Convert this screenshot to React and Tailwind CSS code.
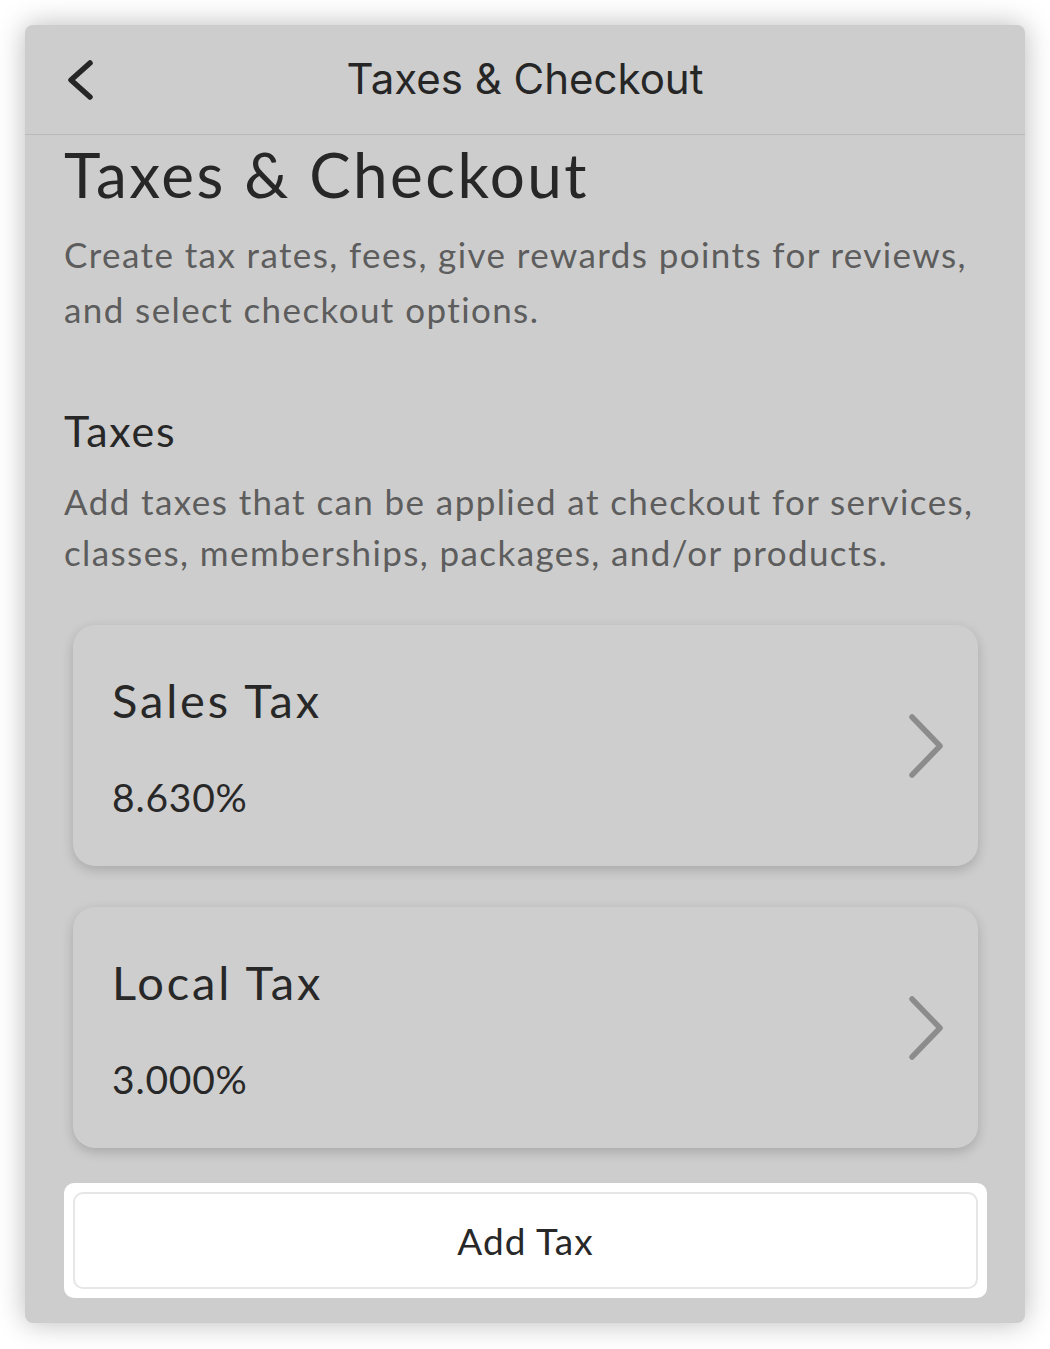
const taxes = [
  { name: "Sales Tax", rate: "8.630%" },
  { name: "Local Tax", rate: "3.000%" },
];

const body = { fontFamily: "Lato, 'Open Sans', sans-serif" };

const TaxCard = ({ tax }) => (
  <div className="mx-[9px] h-[241px] rounded-[22px] bg-[#cecece] shadow-[0_4px_12px_rgba(0,0,0,0.18)] flex items-center justify-between pl-[39px] pr-[32px]">
    <div className="flex flex-col">
      <p className="text-[47px] leading-[56px] tracking-[0.06em] text-[#282828]">
        {tax.name}
      </p>
      <p className="mt-[47px] text-[39px] leading-[44px] tracking-[0.02em] text-[#282828]">
        {tax.rate}
      </p>
    </div>
    <svg width="42" height="70" viewBox="0 0 42 70" fill="none">
      <polyline
        points="8,6 36,35 8,64"
        stroke="#8c8c8c"
        strokeWidth="5.5"
        strokeLinecap="round"
        strokeLinejoin="round"
      />
    </svg>
  </div>
);

export default function App() {
  return (
    <div className="min-h-[1349px] bg-white p-[25px]" style={body}>
      <div className="w-[1000px] h-[1298px] rounded-lg bg-[#cdcdcd] shadow-[0_0_28px_rgba(0,0,0,0.28)] flex flex-col overflow-hidden">
        {/* Header */}
        <div className="h-[110px] shrink-0 border-b border-[#b9b9b9] grid grid-cols-[1fr_auto_1fr] items-center px-[36px]">
          <svg width="36" height="44" viewBox="0 0 36 44" fill="none">
            <polyline
              points="29,5 10,22 29,39"
              stroke="#262626"
              strokeWidth="5.5"
              strokeLinecap="round"
              strokeLinejoin="round"
            />
          </svg>
          <h1
            className="text-[42px] leading-none text-[#262626] pb-[2px]"
            style={{ fontFamily: "Inter, Roboto, sans-serif" }}
          >
            Taxes &amp; Checkout
          </h1>
          <div />
        </div>

        {/* Content */}
        <div className="flex flex-col pl-[39px] pr-[38px]">
          <h2 className="mt-[3px] text-[62px] leading-[72px] tracking-[0.04em] text-[#272727]">
            Taxes &amp; Checkout
          </h2>
          <p className="mt-[17px] text-[35px] leading-[55px] tracking-[0.04em] text-[#5d5d5d]">
            Create tax rates, fees, give rewards points for reviews, and select
            checkout options.
          </p>

          <h3 className="mt-[69px] text-[43px] leading-[50px] tracking-[0.04em] text-[#272727]">
            Taxes
          </h3>
          <p className="mt-[20px] text-[35px] leading-[51px] tracking-[0.04em] text-[#5d5d5d]">
            Add taxes that can be applied at checkout for services, classes,
            memberships, packages, and/or products.
          </p>

          <div className="mt-[47px] flex flex-col gap-[41px]">
            {taxes.map((tax) => (
              <TaxCard key={tax.name} tax={tax} />
            ))}
          </div>

          {/* Add Tax (highlighted) */}
          <div className="mt-[35px] rounded-[10px] bg-white p-[9px]">
            <button className="w-full h-[97px] rounded-[10px] border-2 border-[#e6e6e6] bg-white text-[37px] tracking-[0.03em] text-[#282828]">
              Add Tax
            </button>
          </div>
        </div>
      </div>
    </div>
  );
}
